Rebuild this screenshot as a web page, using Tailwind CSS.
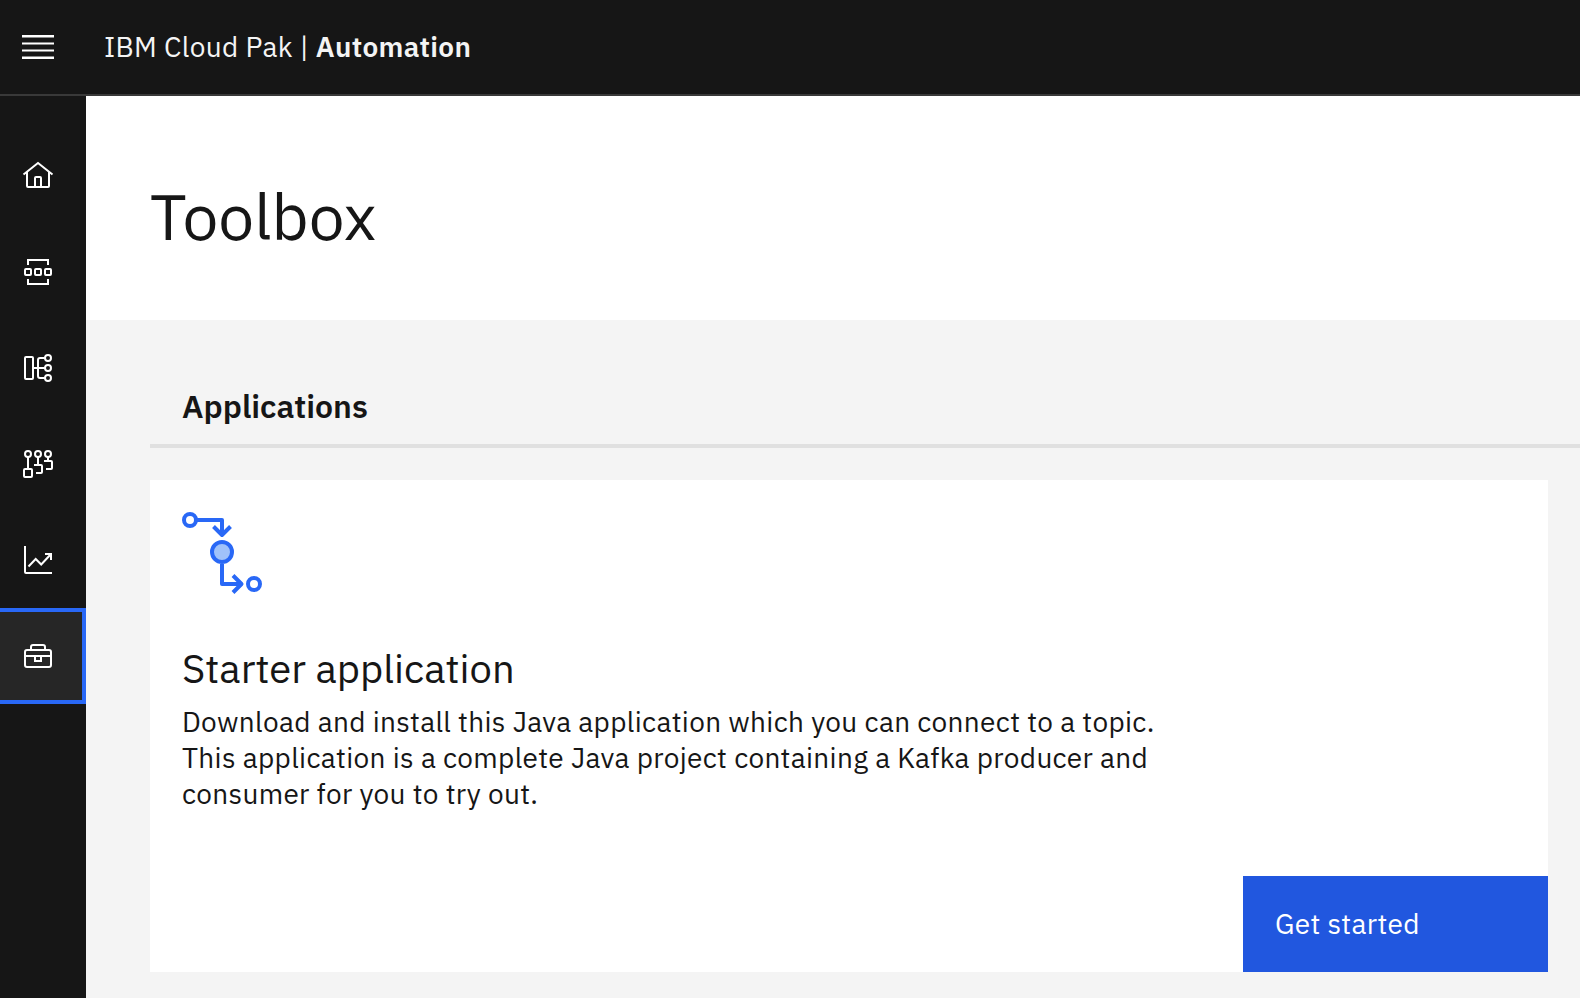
<!DOCTYPE html>
<html lang="en">
<head>
<meta charset="utf-8">
<title>IBM Cloud Pak | Automation</title>
<script src="https://cdn.jsdelivr.net/npm/@tailwindcss/browser@4"></script>
</head>
<body class="h-screen flex flex-col overflow-hidden bg-[#f4f4f4] text-[#161616] font-['IBM_Plex_Sans',Roboto,sans-serif] antialiased">
<header class="h-24 shrink-0 flex items-center bg-[#161616] border-b-2 border-[#393939] text-[#f4f4f4]">
  <button class="ml-[22px] w-8 h-6 shrink-0" aria-label="Menu">
    <svg width="32" height="24" viewBox="0 0 32 24" fill="#fff" class="block"><path d="M0 0h32v2.400H0zM0 7.400h32v2.200H0zM0 14.400h32v2.200H0zM0 21.600h32V24H0z"/></svg>
  </button>
  <div class="ml-[50px] text-[28px] whitespace-pre leading-9 tracking-[0.32px]">IBM Cloud Pak | <span class="font-semibold">Automation</span></div>
</header>
<div class="flex flex-1 min-h-0">
  <nav class="w-[86px] shrink-0 bg-[#161616] pt-8 flex flex-col text-white">
    <a class="h-24 flex items-center pl-[22px]"><svg width="32" height="32" viewBox="0 0 32 32" fill="none" stroke="currentColor" stroke-width="2"><path d="M1.500 14.500 16 3 30.500 14.500M5 12V26q0 1 1 1H26q1 0 1-1V12M13 27V18q0-1 1-1h4q1 0 1 1v9"/></svg></a>
    <a class="h-24 flex items-center pl-[22px]"><svg width="32" height="32" viewBox="0 0 32 32" fill="none" stroke="currentColor" stroke-width="2"><path d="M6 9V4H26V9M6 23v5H26V23"/><rect x="3" y="13" width="6" height="6" rx="1"/><rect x="13" y="13" width="6" height="6" rx="1"/><rect x="23" y="13" width="6" height="6" rx="1"/></svg></a>
    <a class="h-24 flex items-center pl-[22px]"><svg width="32" height="32" viewBox="0 0 32 32" fill="none" stroke="currentColor" stroke-width="2"><rect x="3" y="5" width="8" height="22" rx="1"/><circle cx="26" cy="6" r="3"/><circle cx="26" cy="16" r="3"/><circle cx="26" cy="26" r="3"/><path d="M11 16H23M23 6H18q-2 0-2 2V24q0 2 2 2h5"/></svg></a>
    <a class="h-24 flex items-center pl-[22px]"><svg width="32" height="32" viewBox="0 0 32 32" fill="none" stroke="currentColor" stroke-width="2"><circle cx="6" cy="6" r="3"/><circle cx="16" cy="6" r="3"/><circle cx="26" cy="6" r="3"/><rect x="2" y="21" width="8" height="8" rx="1"/><path d="M6 9V21M16 9V17M12 17H19q1 0 1 1v6q0 1-1 1H14M26 9v4M22 13H29q1 0 1 1v6q0 1-1 1H24"/></svg></a>
    <a class="h-24 flex items-center pl-[22px]"><svg width="32" height="32" viewBox="0 0 32 32" fill="none" stroke="currentColor" stroke-width="2"><path d="M3 2V28q0 1 1 1H30M6.500 22.500 13.700 15 19.200 20.500 29 10M23 10h6v6"/></svg></a>
    <a class="h-24 flex items-center pl-[22px] bg-[#262626] border-4 border-l-0 border-[#2968f6]"><svg width="32" height="32" viewBox="0 0 32 32" fill="none" stroke="currentColor" stroke-width="2"><rect x="3" y="10" width="26" height="17" rx="2"/><path d="M9 10V7q0-2 2-2H21q2 0 2 2v3M3 16H29M13 16v5h6V16"/></svg></a>
  </nav>
  <main class="flex-1 min-w-0">
    <section class="h-56 bg-white pl-16 pt-20">
      <h1 class="text-[64px] leading-[80px]">Toolbox</h1>
    </section>
    <section class="pl-16">
      <h2 class="h-32 pt-[66px] pl-8 border-b-4 border-[#e0e0e0] text-[32px] leading-10 font-semibold">Applications</h2>
      <div class="mt-8 mr-8 h-[492px] bg-white flex flex-col justify-between pt-8">
        <div class="pl-8">
          <svg width="80" height="80" viewBox="0 0 80 80" fill="none" stroke="#2968f6" stroke-width="4" stroke-linejoin="round" class="block overflow-visible"><circle cx="8" cy="8" r="6"/><path d="M14 8H40V23M40 52V72H59"/><path d="M31.500 14.500 40 23 48.500 14.500M51 63.500 59.500 72 51 80.500"/><circle cx="40" cy="40" r="10" fill="#a0c2fa"/><circle cx="72" cy="72" r="6"/></svg>
          <h3 class="mt-[52px] text-[40px] leading-[48px]">Starter application</h3>
          <p class="mt-3 text-[28px] leading-9 tracking-[0.32px] whitespace-nowrap">Download and install this Java application which you can connect to a topic.<br>This application is a complete Java project containing a Kafka producer and<br>consumer for you to try out.</p>
        </div>
        <button class="self-end w-[305px] h-24 pl-8 bg-[#2157df] text-white text-left text-[28px] tracking-[0.32px]">Get started</button>
      </div>
    </section>
  </main>
</div>
</body>
</html>
